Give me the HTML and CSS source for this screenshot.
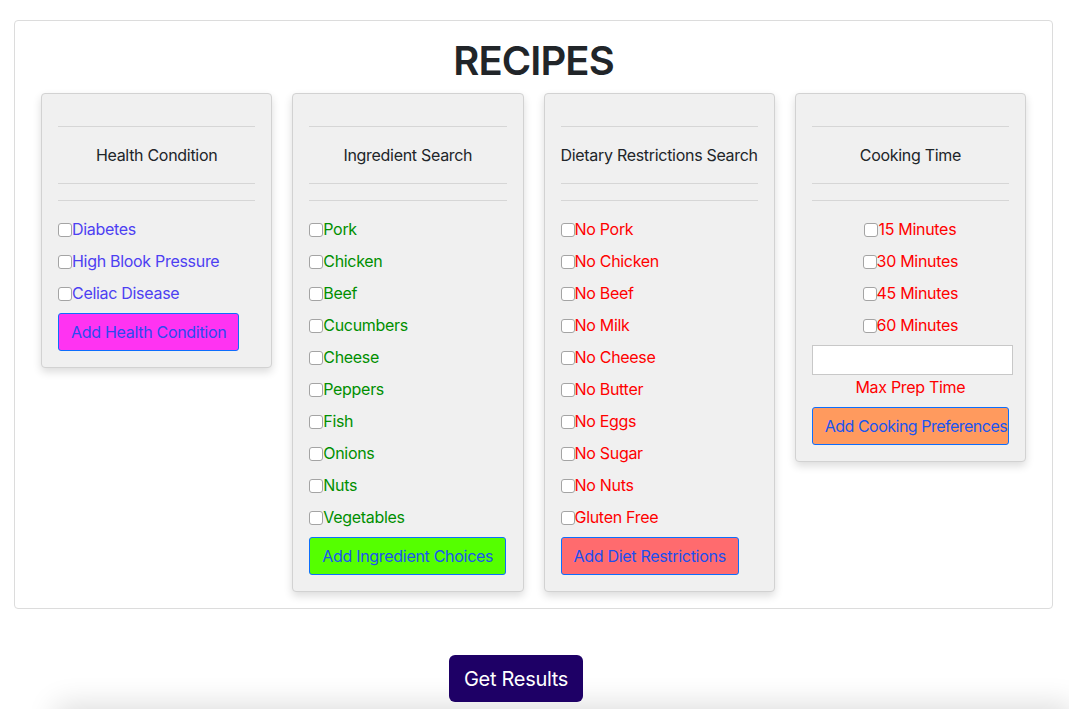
FILE: index.html
```html
<!DOCTYPE html>
<html lang="en">
<head>
<meta charset="utf-8">
<title>Recipes</title>
<link rel="stylesheet" href="styles.css">
</head>
<body>
<main class="page">
  <section class="outer">
    <h1 class="title">RECIPES</h1>
    <div class="cols">
      <div class="card">
        <hr class="rule">
        <h5 class="card-head">Health Condition</h5>
        <hr class="rule">
        <hr class="rule">
        <ul class="opts health">
          <li><label><input type="checkbox">Diabetes</label></li>
          <li><label><input type="checkbox">High Blook Pressure</label></li>
          <li><label><input type="checkbox">Celiac Disease</label></li>
        </ul>
        <button class="btn btn-health">Add Health Condition</button>
      </div>
      <div class="card">
        <hr class="rule">
        <h5 class="card-head">Ingredient Search</h5>
        <hr class="rule">
        <hr class="rule">
        <ul class="opts ingr">
          <li><label><input type="checkbox">Pork</label></li>
          <li><label><input type="checkbox">Chicken</label></li>
          <li><label><input type="checkbox">Beef</label></li>
          <li><label><input type="checkbox">Cucumbers</label></li>
          <li><label><input type="checkbox">Cheese</label></li>
          <li><label><input type="checkbox">Peppers</label></li>
          <li><label><input type="checkbox">Fish</label></li>
          <li><label><input type="checkbox">Onions</label></li>
          <li><label><input type="checkbox">Nuts</label></li>
          <li><label><input type="checkbox">Vegetables</label></li>
        </ul>
        <button class="btn btn-ingr">Add Ingredient Choices</button>
      </div>
      <div class="card">
        <hr class="rule">
        <h5 class="card-head">Dietary Restrictions Search</h5>
        <hr class="rule">
        <hr class="rule">
        <ul class="opts diet">
          <li><label><input type="checkbox">No Pork</label></li>
          <li><label><input type="checkbox">No Chicken</label></li>
          <li><label><input type="checkbox">No Beef</label></li>
          <li><label><input type="checkbox">No Milk</label></li>
          <li><label><input type="checkbox">No Cheese</label></li>
          <li><label><input type="checkbox">No Butter</label></li>
          <li><label><input type="checkbox">No Eggs</label></li>
          <li><label><input type="checkbox">No Sugar</label></li>
          <li><label><input type="checkbox">No Nuts</label></li>
          <li><label><input type="checkbox">Gluten Free</label></li>
        </ul>
        <button class="btn btn-diet">Add Diet Restrictions</button>
      </div>
      <div class="card">
        <hr class="rule">
        <h5 class="card-head">Cooking Time</h5>
        <hr class="rule">
        <hr class="rule">
        <ul class="opts time">
          <li><label><input type="checkbox">15 Minutes</label></li>
          <li><label><input type="checkbox">30 Minutes</label></li>
          <li><label><input type="checkbox">45 Minutes</label></li>
          <li><label><input type="checkbox">60 Minutes</label></li>
        </ul>
        <input class="prep-input" type="text">
        <p class="prep-label">Max Prep Time</p>
        <button class="btn btn-time">Add Cooking Preferences</button>
      </div>
    </div>
  </section>
  <div class="actions">
    <button class="btn-results">Get Results</button>
  </div>
</main>
<div class="bottom-shade"></div>
</body>
</html>
```
FILE: styles.css
```css
* { box-sizing: border-box; }

html, body {
  margin: 0;
  padding: 0;
  background: #fff;
}

body {
  font-family: Inter, "Liberation Sans", Arial, sans-serif;
  font-size: 16px;
  line-height: 1.5;
  color: #212529;
  letter-spacing: -0.3px;
}

.page {
  padding: 20px 16px 0 14px;
}

.outer {
  border: 1px solid #dcdcdc;
  border-radius: 4px;
  padding: 16px 0 16px 0;
  background: #fff;
}

.title {
  margin: 0 0 8px 0;
  text-align: center;
  font-size: 40px;
  line-height: 48px;
  font-weight: 600;
  letter-spacing: -0.9px;
  color: #212529;
}

.cols {
  display: grid;
  grid-template-columns: repeat(4, minmax(0, 1fr));
  column-gap: 20px;
  padding: 0 26px;
  align-items: start;
}

.card {
  background: #f0f0f0;
  border: 1px solid #d2d2d2;
  border-radius: 4px;
  box-shadow: 0 4px 8px rgba(0, 0, 0, 0.14);
  padding: 16px;
  display: flex;
  flex-direction: column;
  min-width: 0;
}

.rule {
  border: 0;
  border-top: 1px solid #d6d6d6;
  margin: 16px 0;
  height: 0;
}

.rule + .rule { margin-top: 0; }

.card-head {
  margin: 0;
  text-align: center;
  font-size: 16px;
  font-weight: 400;
  line-height: 24px;
  white-space: nowrap;
  color: #212529;
}

.opts {
  list-style: none;
  margin: 0;
  padding: 0;
}

.opts li {
  margin: 0 0 8px 0;
  height: 24px;
  line-height: 24px;
  display: flex;
  align-items: center;
}

.time li { justify-content: center; }

.opts label {
  display: flex;
  align-items: center;
  height: 24px;
}

.opts input {
  appearance: none;
  -webkit-appearance: none;
  width: 14px;
  height: 14px;
  margin: 1px 0 0 0;
  border: 1px solid #a4a4a4;
  border-radius: 3px;
  background: #fff;
  flex: none;
}

.health { color: #4d3ff2; }
.ingr { color: #008f00; }
.diet { color: #ff0000; }
.time { color: #ff0000; }

.btn {
  align-self: flex-start;
  font-family: inherit;
  font-size: 16px;
  letter-spacing: -0.3px;
  line-height: 24px;
  padding: 6px 12px;
  border: 1px solid #0d6efd;
  border-radius: 3px;
  color: #0d6efd;
  white-space: nowrap;
  cursor: pointer;
}

.btn-health { background: #ff33f2; color: #2a4bf0; }
.btn-ingr { background: #55ff00; color: #1a55f0; }
.btn-diet { background: #ff6b6e; color: #1a4ff0; }
.btn-time {
  background: #ff9a5e;
  color: #1a55f0;
  align-self: stretch;
  overflow: hidden;
  text-align: left;
  letter-spacing: -0.5px;
  padding-right: 0;
}

.prep-input {
  width: 201px;
  height: 30px;
  border: 1px solid #c8c8c8;
  background: #fff;
  margin: 0;
  padding: 2px 4px;
  font-family: inherit;
}

.prep-label {
  margin: 0 0 8px 0;
  text-align: center;
  color: #ff0000;
  line-height: 24px;
}

.actions {
  position: relative;
  z-index: 1;
  padding: 46px 0 0 435px;
}

.btn-results {
  font-family: inherit;
  font-size: 20px;
  letter-spacing: -0.3px;
  line-height: 30px;
  padding: 8px 15px;
  background: #1e0066;
  color: #fff;
  border: 0;
  border-radius: 6px;
  height: 47px;
  cursor: pointer;
}

.bottom-shade {
  position: fixed;
  left: 60px;
  right: 0;
  bottom: -30px;
  height: 30px;
  box-shadow: 0 0 30px 4px rgba(0, 0, 0, 0.14);
  pointer-events: none;
}
```
